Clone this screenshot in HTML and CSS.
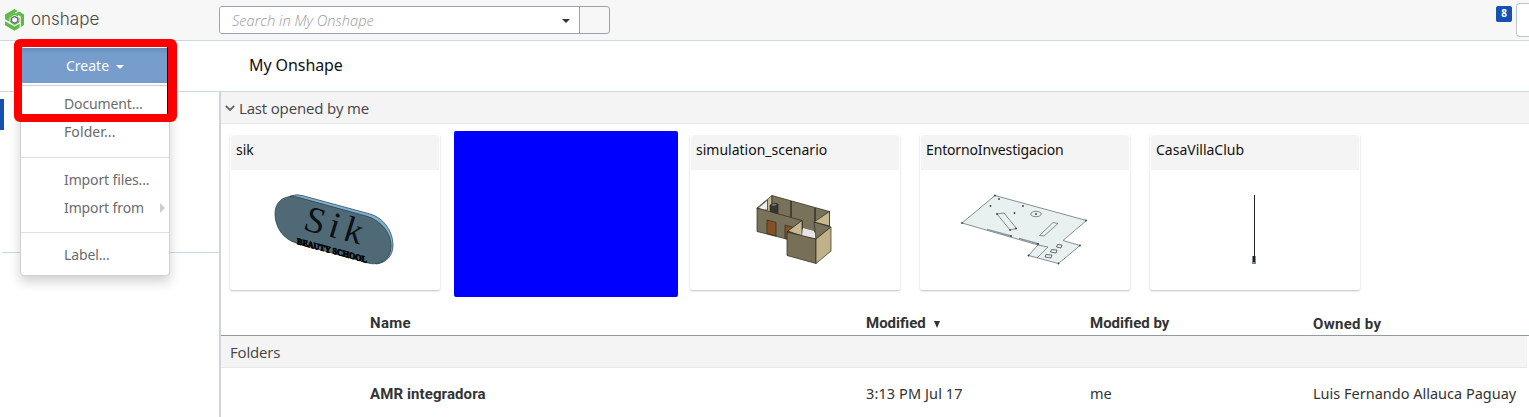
FILE: index.html
```html
<!DOCTYPE html>
<html lang="en">
<head>
<meta charset="utf-8">
<title>My Onshape</title>
<link rel="stylesheet" href="styles.css">
</head>
<body>
<header class="topbar">
  <div class="brand">
    <svg class="brand-mark" width="20" height="22" viewBox="0 0 20 22">
      <path d="M0 7V5.500L9.500 0L12.800 1.900L4 7V12.600L0 10.300Z M14 2.600L19 5.500V16L15.800 17.900V7.600L10.800 4.600Z M0 12.200L9.500 17.600L14.600 14.700V18.700L9.500 21.700L0 16.300Z" fill="#5dbb46"/>
      <path d="M3.800 8.300L9.600 4.700L13 6.700" fill="none" stroke="#5dbb46" stroke-width="1.800"/>
      <path d="M5 8.700V12.500L9.600 15.800L14 13V8.500" fill="none" stroke="#5dbb46" stroke-width="1"/>
      <path d="M9.600 7.400L12.700 9.200V12.600L9.600 14.400L6.500 12.600V9.200Z" fill="#f7f7f7" stroke="#6b6b6b" stroke-width="1.300"/>
    </svg>
    <span class="brand-name">onshape</span>
  </div>
  <div class="search">
    <div class="search-field"><span class="search-hint">Search in My Onshape</span><i class="caret"></i></div>
    <div class="search-button"></div>
  </div>
  <div class="account">
    <span class="count">8</span>
    <div class="account-box"></div>
  </div>
</header>
<div class="titlebar"><h1 class="title">My Onshape</h1></div>
<div class="body">
  <aside class="sidebar"><div class="side-active"></div><div class="side-rule"></div></aside>
  <main class="main">
    <div class="section section-recent">
      <svg class="chevron" width="10" height="7" viewBox="0 0 10 7"><path d="M0.900 1L5 5L9.100 1" fill="none" stroke="#666" stroke-width="1.800"/></svg>
      <span class="recent-label">Last opened by me</span>
    </div>
    <div class="cards">
      <article class="card">
        <div class="card-head">sik</div>
        <svg class="thumb" width="208" height="120" viewBox="231 170 208 120">
          <path d="M290 196Q297 193.500 304 196L370 214C382 217 393 230 393 245C393 256 386 263 376 264L362 250L290 200Z" fill="#7eb2d2" stroke="#26353e" stroke-width=".7"/>
          <path d="M299 197.500L366 216C380 220 391 232 391 246C391 260 379 266 368 263L296 243C283 239 275 227 275 214C275 200 286 194 299 197.500Z" fill="#506977" stroke="#26353e" stroke-width=".7"/>
          <text class="logo-script" transform="matrix(1 .26 -.12 1 304 230)" textLength="56" lengthAdjust="spacing">Sik</text>
          <text class="logo-caps" transform="matrix(1 .27 0 1 297 244)" textLength="70" lengthAdjust="spacingAndGlyphs">BEAUTY SCHOOL</text>
        </svg>
      </article>
      <article class="card"><div class="redaction"></div></article>
      <article class="card">
        <div class="card-head">simulation_scenario</div>
        <svg class="thumb" width="208" height="120" viewBox="691 170 208 120" stroke="#292820" stroke-width=".7" stroke-linejoin="round">
          <path d="M757 208L772 195.500V213L762 220Z" fill="#c6b891"/>
          <path d="M758 208L767.500 200V210L762 210Z" fill="#eee"/>
          <path d="M772 195.500L829.500 211.500V226L814 232L772 218Z" fill="#79725a"/>
          <path d="M791 201V217M815 208V223" stroke-width="1.300"/>
          <path d="M770 205L774 203L778 204V215L770 213Z" fill="#343633"/><path d="M771 205L774 203.500L777 204.500L774 206Z" fill="#777" stroke="none"/>
          <path d="M829.500 211.500V226L814 222Z" fill="#c6b891"/>
          <path d="M757 208L802 220.500V243L757 231.500Z" fill="#79725a"/>
          <path d="M767 220L776 222.500V236L767 233.500ZM785 225L795 228V241L785 238.500Z" fill="#875223"/>
          <path d="M787 232L802 220.500V236L816 240L814 222L831 227L816 239Z" fill="#79725a"/>
          <path d="M788 231L802 220.500V236Z" fill="#c6b891"/>
          <path d="M802 236L803 228L814 231V238Z" fill="#e7e4e8" stroke="none"/>
          <path d="M787 232L816 239V263.500L787 255.500Z" fill="#777057"/>
          <path d="M816 239L831 227V251L816 263.500Z" fill="#c1b188"/>
        </svg>
      </article>
      <article class="card">
        <div class="card-head"><span class="tight">EntornoInvestigacion</span></div>
        <svg class="thumb" width="208" height="120" viewBox="921 170 208 120" fill="none" stroke="#68757a" stroke-width=".8">
          <path d="M995 195.500L1086.500 220.500L1063 240.500L1080 245.500L1058.500 263.500L1028.500 255.500L1038 245L962 223Z" fill="#e9f0f0"/>
          <path d="M997 214L1004 213L1016.500 228.500L1010 230ZM1039.500 235.500L1053 222.500L1058 223.500L1044 236ZM1038 245L1048 247L1037 258"/>
          <path d="M987 229.500L1011 236M1019 238.500L1039 244" stroke="#89979c" stroke-width="1.700"/>
          <ellipse cx="1036" cy="214" rx="5.200" ry="2.700"/>
          <path d="M1057.500 244.500L1062 245L1061 248L1056.500 247ZM1051.500 249.500L1057 250L1056 253L1050.500 252ZM1046 254.500L1052 255L1051 258L1045 257Z" stroke="#485157"/>
          <g fill="#333d46" stroke="none"><circle cx="995" cy="195.500" r=".9"/><circle cx="999" cy="199" r=".9"/><circle cx="990.500" cy="206" r=".9"/><circle cx="1023" cy="206" r=".9"/><circle cx="1014.500" cy="213" r=".9"/><circle cx="1036" cy="214" r=".9"/><circle cx="1086" cy="220.500" r=".9"/><circle cx="962" cy="223" r=".9"/><circle cx="1080" cy="245.500" r=".9"/><circle cx="1058.500" cy="263.500" r=".9"/><circle cx="1028.500" cy="255.500" r=".9"/><circle cx="997" cy="214" r=".9"/><circle cx="1016" cy="228.500" r=".9"/><circle cx="1010" cy="230" r=".9"/><circle cx="1011" cy="236" r=".9"/><circle cx="1038" cy="244" r="1"/></g>
        </svg>
      </article>
      <article class="card">
        <div class="card-head">CasaVillaClub</div>
        <svg class="thumb" width="208" height="120" viewBox="1151 170 208 120"><path d="M1254 195H1255V256H1254Z" fill="#252525"/><path d="M1252.500 256H1255.500V262H1252.500Z" fill="#172028"/><path d="M1252 262H1256V264H1252Z" fill="#738391"/></svg>
      </article>
    </div>
    <div class="row row-head">
      <span class="c-name"><b class="wide">Name</b></span>
      <span><b>Modified</b><i class="sort"></i></span>
      <span><b>Modified by</b></span>
      <span class="c-owner"><b class="wide">Owned by</b></span>
    </div>
    <div class="section section-folders"><span class="folders-label">Folders</span></div>
    <div class="row row-item">
      <span class="c-name"><b class="item-name">AMR integradora</b></span>
      <span class="date">3:13 PM Jul 17</span>
      <span>me</span>
      <span>Luis Fernando Allauca Paguay</span>
    </div>
  </main>
</div>
<nav class="menu">
  <div class="create"><span>Create</span><i class="caret caret-light"></i></div>
  <div class="menu-list">
    <div class="item"><span>Document...</span></div>
    <div class="item"><span class="folder-item">Folder...</span></div>
    <div class="divider"></div>
    <div class="item"><span>Import files...</span></div>
    <div class="item"><span>Import from</span><i class="submenu"></i></div>
    <div class="divider divider-last"></div>
    <div class="item"><span>Label...</span></div>
  </div>
</nav>
<div class="highlight"></div>
</body>
</html>
```

FILE: styles.css
```css
* { box-sizing: border-box; }
body { margin: 0; width: 1529px; height: 417px; overflow: hidden; position: relative; background: #fff; color: #333; font: 14px/20px "Noto Sans", sans-serif; }
.topbar { height: 41px; display: flex; background: #f7f7f7; border-bottom: 1px solid #cad9e5; }
.brand { width: 219px; padding: 9px 0 0 5px; display: flex; gap: 6px; }
.brand-name { font: 300 17px/21px Inter, Lato, sans-serif; color: #4a4a4a; letter-spacing: 0; }
.search { display: flex; width: 391px; height: 28px; margin-top: 6px; border: 1px solid #98a3af; border-radius: 3px; overflow: hidden; }
.search-field { width: 360px; background: #fff; border-right: 1px solid #98a3af; display: flex; align-items: center; justify-content: space-between; padding: 0 9px 0 12px; }
.search-hint { font: italic 300 14.7px/20px "Open Sans", sans-serif; color: #999; }
.caret { width: 0; height: 0; border: 4px solid transparent; border-top-color: #333; border-bottom: 0; margin-top: 1px; }
.account { margin-left: auto; display: flex; gap: 4px; }
.count { width: 16px; height: 16px; margin-top: 6px; border-radius: 2px; background: #1651b0; color: #fff; font: bold 10px/15px "Noto Sans", sans-serif; text-align: center; }
.account-box { width: 13px; height: 34px; margin-top: 3px; background: #fff; border: 1px solid #c4c4c4; border-right: 0; border-radius: 4px 0 0 4px; }
.titlebar { height: 51px; border-bottom: 1px solid #cad9e5; padding: 14px 0 0 249px; }
.title { margin: 0; font: 16px/20px "Noto Sans", sans-serif; letter-spacing: -.08px; color: #111; }
.body { display: flex; height: 325px; }
.sidebar { width: 221px; padding-top: 7px; border-right: 2px solid #ced5da; }
.side-active { width: 4px; height: 31px; background: #1651b0; }
.side-rule { height: 1px; margin: 122px 0 0 2px; background: #cad9e5; }
.main { width: 1308px; }
.section { height: 32px; background: #f4f4f4; border-bottom: 1px solid #e8e8e8; display: flex; align-items: center; }
.section-recent { padding: 1px 0 0 4px; gap: 4px; }
.chevron { margin-top: 1px; }
.recent-label, .folders-label { font: 15px/20px "Open Sans", sans-serif; letter-spacing: -.16px; color: #444; }
.cards { display: flex; gap: 20px; padding: 10px 0 0 9px; }
.card { width: 210px; height: 156px; padding: 1px; position: relative; border-radius: 2px; box-shadow: 0 1px 2px rgba(0,0,0,.24); }
.card-head { height: 35px; padding: 5px; background: #f4f4f4; border-radius: 4px 4px 0 0; color: #111; }
.tight { letter-spacing: -.15px; }
.thumb { display: block; }
.logo-script { font: italic 37px "Liberation Serif", serif; fill: #0b1114; }
.logo-caps { font: bold 9px "Liberation Serif", serif; fill: #000; stroke: #000; stroke-width: .8px; }
.redaction { position: absolute; left: -6px; top: -3px; width: 224px; height: 166px; background: #00f; border-radius: 2px; }
.row { display: grid; grid-template-columns: 645px 224px 223px 216px; }
.c-name { padding-left: 149px; }
.row b { font: bold 15px/20px Roboto, sans-serif; }
.row .wide { letter-spacing: .3px; }
.row .item-name { letter-spacing: .1px; }
.row-head { height: 46px; padding-top: 23px; border-bottom: 1px solid #929a9f; }
.row-head .c-owner { padding-top: 1px; }
.sort { display: inline-block; margin-left: 8px; border: 3.5px solid transparent; border-top: 7px solid #333; border-bottom: 0; }
.section-folders { padding: 1px 0 0 9px; margin-right: 2px; }
.row-item { padding-top: 15px; font-size: 14.5px; }
.date { letter-spacing: .1px; }
.menu { position: absolute; left: 20px; top: 48px; width: 150px; }
.create { width: 147px; height: 35px; margin-bottom: 2px; margin-left: 1px; padding: 1px 0 0 45px; display: flex; align-items: center; gap: 7px; background: linear-gradient(#658fbf, #769dcb 6px); color: #fff; }
.caret-light { border-top-color: #fff; margin-top: 2px; }
.menu-list { height: 191px; padding-top: 4px; background: #fff; border: 1px solid #d0d0d0; border-radius: 0 0 4px 4px; box-shadow: 0 6px 12px rgba(0,0,0,.18); color: #6b6b6b; letter-spacing: -.12px; }
.item { height: 28px; padding: 4px 4px 4px 43px; display: flex; align-items: center; justify-content: space-between; }
.folder-item { letter-spacing: .1px; }
.divider { height: 1px; margin: 11px 0 8px; background: #e0e0e0; }
.divider-last { margin-top: 10px; }
.submenu { border: 5px solid transparent; border-left-color: #ccc; border-right: 0; }
.highlight { position: absolute; left: 14px; top: 39px; width: 163px; height: 83px; border: 8px solid #f00; border-right-width: 9px; border-radius: 6px; }
.highlight::after { content: ""; position: absolute; right: 0; top: 0; width: 1px; height: 100%; background: #00b; }
```
